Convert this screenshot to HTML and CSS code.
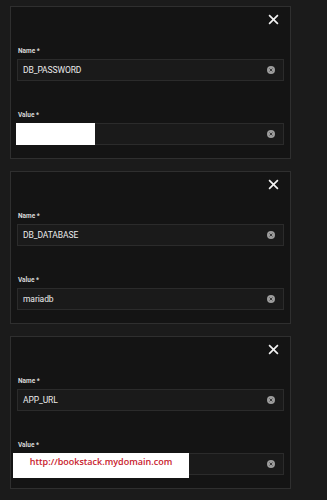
FILE: index.html
```html
<!DOCTYPE html>
<html>
<head>
<meta charset="utf-8">
<link rel="stylesheet" href="styles.css">
</head>
<body>
<div class="list">
  <section class="panel">
    <div class="head"><svg class="close" viewBox="0 0 10 10"><path d="M1 1L9 9M9 1L1 9"/></svg></div>
    <label class="lbl">Name *</label>
    <div class="field"><span class="val">DB_PASSWORD</span><svg class="clr" viewBox="0 0 8 8"><circle cx="4" cy="4" r="4"/><path d="M2.6 2.6L5.4 5.4M5.4 2.6L2.6 5.4"/></svg></div>
    <label class="lbl lbl2">Value *</label>
    <div class="field"><span class="val"></span><svg class="clr" viewBox="0 0 8 8"><circle cx="4" cy="4" r="4"/><path d="M2.6 2.6L5.4 5.4M5.4 2.6L2.6 5.4"/></svg></div>
    <div class="mask mask1"></div>
  </section>
  <section class="panel">
    <div class="head"><svg class="close" viewBox="0 0 10 10"><path d="M1 1L9 9M9 1L1 9"/></svg></div>
    <label class="lbl">Name *</label>
    <div class="field"><span class="val">DB_DATABASE</span><svg class="clr" viewBox="0 0 8 8"><circle cx="4" cy="4" r="4"/><path d="M2.6 2.6L5.4 5.4M5.4 2.6L2.6 5.4"/></svg></div>
    <label class="lbl lbl2">Value *</label>
    <div class="field"><span class="val">mariadb</span><svg class="clr" viewBox="0 0 8 8"><circle cx="4" cy="4" r="4"/><path d="M2.6 2.6L5.4 5.4M5.4 2.6L2.6 5.4"/></svg></div>
  </section>
  <section class="panel">
    <div class="head"><svg class="close" viewBox="0 0 10 10"><path d="M1 1L9 9M9 1L1 9"/></svg></div>
    <label class="lbl">Name *</label>
    <div class="field"><span class="val">APP_URL</span><svg class="clr" viewBox="0 0 8 8"><circle cx="4" cy="4" r="4"/><path d="M2.6 2.6L5.4 5.4M5.4 2.6L2.6 5.4"/></svg></div>
    <label class="lbl lbl2">Value *</label>
    <div class="field"><span class="val"></span><svg class="clr" viewBox="0 0 8 8"><circle cx="4" cy="4" r="4"/><path d="M2.6 2.6L5.4 5.4M5.4 2.6L2.6 5.4"/></svg></div>
    <div class="mask mask3">http://bookstack.mydomain.com</div>
  </section>
</div>
</body>
</html>
```

FILE: styles.css
```css
html, body {
  margin: 0;
  padding: 0;
  background: #1b1b1b;
  height: 100%;
}
body {
  font-family: Roboto, "Liberation Sans", sans-serif;
  color: #dedede;
}
.list {
  display: flex;
  flex-direction: column;
  gap: 12px;
  padding: 6px 0 0 10px;
}
.panel {
  position: relative;
  box-sizing: border-box;
  width: 281px;
  height: 153px;
  background: #141414;
  border: 1px solid #2f2f2f;
  padding: 0 6px;
  display: flex;
  flex-direction: column;
}
.head {
  height: 27px;
  display: flex;
  justify-content: flex-end;
  align-items: flex-start;
}
.close {
  width: 11px;
  height: 11px;
  margin-top: 7px;
  margin-right: 5px;
  fill: none;
  stroke: #f2f2f2;
  stroke-width: 1.5;
}
.lbl {
  display: block;
  margin-top: 13px;
  height: 9px;
  line-height: 9px;
  font-size: 6.5px;
  font-weight: 700;
  padding-left: 1px;
  margin-bottom: 3px;
  color: #d8d8d8;
}
.lbl2 {
  margin-top: 30px;
  margin-bottom: 3px;
}
.field {
  box-sizing: border-box;
  height: 22px;
  background: #1a1a1a;
  border: 1px solid #2b2b2b;
  display: flex;
  align-items: center;
  padding: 0 8px 0 5px;
}
.val {
  flex: 1;
  font-size: 8.5px;
  letter-spacing: -0.1px;
  color: #ececec;
}
.clr {
  width: 8px;
  height: 8px;
}
.clr circle {
  fill: #9c9c9c;
}
.clr path {
  stroke: #3a3a3a;
  stroke-width: 1;
}
.mask {
  position: absolute;
  background: #ffffff;
}
.mask1 {
  left: 5px;
  top: 116px;
  width: 79px;
  height: 22px;
}
.mask3 {
  left: 2px;
  top: 116px;
  width: 176px;
  height: 25px;
  box-sizing: border-box;
  padding-top: 3px;
  text-align: center;
  font-family: "Open Sans", "Liberation Sans", sans-serif;
  font-size: 9px;
  font-weight: 600;
  line-height: 12px;
  color: #c8202c;
}
```
